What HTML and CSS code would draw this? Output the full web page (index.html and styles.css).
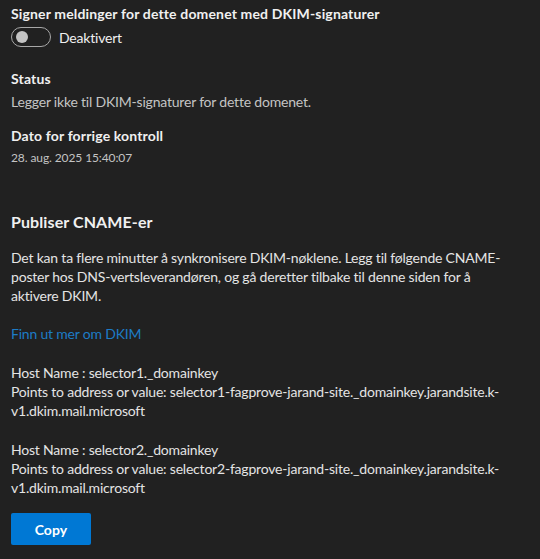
FILE: index.html
```html
<!DOCTYPE html>
<html lang="nb">
<head>
<meta charset="utf-8">
<title>DKIM</title>
<link rel="stylesheet" href="styles.css">
</head>
<body>
<main class="panel">
  <section class="field">
    <div class="label">Signer meldinger for dette domenet med DKIM-signaturer</div>
    <div class="toggle-row">
      <span class="toggle"><span class="knob"></span></span>
      <span class="toggle-text">Deaktivert</span>
    </div>
  </section>

  <section class="field status">
    <div class="label">Status</div>
    <div class="value">Legger ikke til DKIM-signaturer for dette domenet.</div>
  </section>

  <section class="field last">
    <div class="label">Dato for forrige kontroll</div>
    <div class="value small">28. aug. 2025 15:40:07</div>
  </section>

  <section class="publish">
    <h2 class="heading">Publiser CNAME-er</h2>
    <p class="desc">Det kan ta flere minutter å synkronisere DKIM-nøklene. Legg til følgende CNAME-poster hos DNS-vertsleverandøren, og gå deretter tilbake til denne siden for å aktivere DKIM.</p>
    <a class="link" href="#">Finn ut mer om DKIM</a>
    <div class="record">
      <div>Host Name : selector1._domainkey</div>
      <div>Points to address or value: selector1-fagprove-jarand-site._domainkey.jarandsite.k-v1.dkim.mail.microsoft</div>
    </div>
    <div class="record">
      <div>Host Name : selector2._domainkey</div>
      <div>Points to address or value: selector2-fagprove-jarand-site._domainkey.jarandsite.k-v1.dkim.mail.microsoft</div>
    </div>
    <button class="copy" type="button">Copy</button>
  </section>
</main>
</body>
</html>
```

FILE: styles.css
```css
html, body {
  margin: 0;
  padding: 0;
  background: #212121;
}
body {
  font-family: "Segoe UI", Lato, "Open Sans", sans-serif;
  font-size: 14px;
  line-height: 19px;
  letter-spacing: -0.2px;
  color: #e4e4e4;
}
.panel {
  padding: 4px 11px 0 11px;
  width: 502px;
}
.label {
  font-weight: 700;
  letter-spacing: 0.15px;
  color: #f0f0f0;
}
.toggle-row {
  display: flex;
  align-items: center;
  gap: 8px;
  margin-top: 4px;
}
.toggle {
  box-sizing: border-box;
  width: 40px;
  height: 20px;
  border: 1px solid #a8a8a8;
  border-radius: 10px;
  display: flex;
  align-items: center;
  padding-left: 4px;
}
.knob {
  width: 12px;
  height: 12px;
  border-radius: 50%;
  background: #c4c4c4;
}
.toggle-text {
  color: #f0f0f0;
}
.status {
  margin-top: 22px;
}
.value {
  color: #c4c4c4;
  margin-top: 4px;
}
.last {
  margin-top: 15px;
}
.value.small {
  font-size: 12px;
  line-height: 16px;
  letter-spacing: -0.1px;
  margin-top: 5px;
}
.publish {
  margin-top: 45px;
}
.heading {
  margin: 0;
  font-size: 16px;
  font-weight: 700;
  line-height: 22px;
  letter-spacing: 0.1px;
  color: #f0f0f0;
}
.desc {
  margin: 15px 0 0 0;
}
.link {
  display: block;
  margin-top: 19px;
  color: #1d7cc6;
  text-decoration: none;
}
.record {
  margin-top: 20px;
}
.copy {
  display: block;
  margin-top: 16px;
  width: 80px;
  height: 32px;
  padding: 0;
  border: none;
  border-radius: 2px;
  background: #0078d4;
  color: #ffffff;
  font-family: inherit;
  font-size: 14px;
  font-weight: 700;
  letter-spacing: 0.1px;
}
```
